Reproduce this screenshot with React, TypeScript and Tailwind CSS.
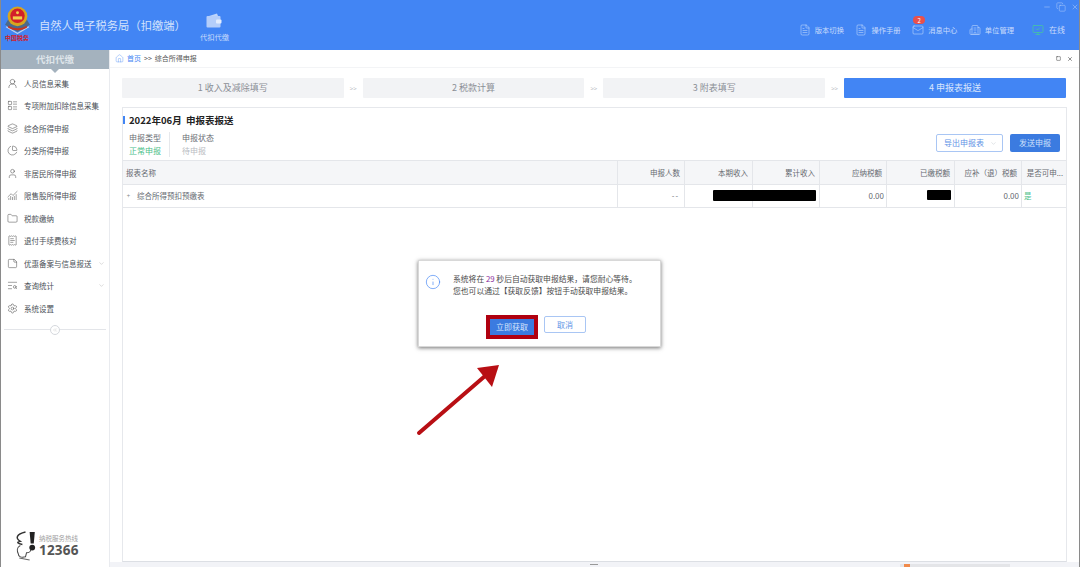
import {
  ChartNoAxesCombined,
  ChevronDown,
  ChevronsLeft,
  FileText,
  Folder,
  Home,
  Info,
  Layers,
  LayoutList,
  Mail,
  MonitorCheck,
  PieChart,
  ReceiptText,
  Settings,
  StickyNote,
  TextSearch,
  User,
  UserRound,
  Building2,
  Copy,
  Square,
  X,
  Minus,
} from "lucide-react";

const font = { fontFamily: '"Noto Sans CJK SC", "Liberation Sans", sans-serif' };

const menu = [
  { label: "人员信息采集", icon: UserRound },
  { label: "专项附加扣除信息采集", icon: LayoutList },
  { label: "综合所得申报", icon: Layers },
  { label: "分类所得申报", icon: PieChart },
  { label: "非居民所得申报", icon: User },
  { label: "限售股所得申报", icon: ChartNoAxesCombined },
  { label: "税款缴纳", icon: Folder },
  { label: "退付手续费核对", icon: ReceiptText },
  { label: "优惠备案与信息报送", icon: StickyNote, more: true },
  { label: "查询统计", icon: TextSearch, more: true },
  { label: "系统设置", icon: Settings },
];

const steps = ["1 收入及减除填写", "2 税款计算", "3 附表填写", "4 申报表报送"];

const headers = ["申报人数", "本期收入", "累计收入", "应纳税额", "已缴税额", "应补（退）税额", "是否可申..."];
const cols = "grid grid-cols-[494px_67px_68px_67px_67px_68px_67px_46px]";

function Emblem() {
  return (
    <div className="flex w-[30px] flex-col items-center">
      <svg width="27" height="28" viewBox="0 0 26 27">
        <path d="M1 18 L13 25 L25 18 L22 13 L4 13 Z" fill="#4b6a8c" />
        <path d="M2 20 L13 26.5 L24 20" fill="none" stroke="#c9d6e4" strokeWidth="1" />
        <circle cx="13" cy="10" r="9.5" fill="#d8a51f" />
        <circle cx="13" cy="9.5" r="7" fill="#d3202a" />
        <rect x="8.5" y="10" width="9" height="3" fill="#f3cf4c" />
        <circle cx="13" cy="6.5" r="1.4" fill="#f3cf4c" />
        <path d="M4 19 Q13 24 22 19 L22 21 Q13 26 4 21 Z" fill="#c6341f" />
      </svg>
      <span className="text-[6px] leading-[7px] font-bold text-[#d3202a]">中国税务</span>
    </div>
  );
}

function Wallet() {
  return (
    <svg width="16" height="15" viewBox="0 0 16 15">
      <path d="M3 3 L11 0.5 L12 3 Z" fill="#bcd4fb" />
      <rect x="0.5" y="3" width="14" height="11.5" rx="1" fill="#b4cefa" />
      <rect x="10" y="6.5" width="5.5" height="4" rx="1" fill="#e3edfe" />
    </svg>
  );
}

function Headset() {
  return (
    <svg width="25" height="31" viewBox="0 0 24 30">
      <path d="M12 2 C3 4 2 8 7 11 C3 12 4 13 9 14" fill="none" stroke="#333" strokeWidth="1.4" />
      <path d="M16 2 H21 L20 13 H17 Z" fill="#222" />
      <circle cx="18.5" cy="17" r="2.8" fill="#222" />
      <path d="M7 15 C3 17 4 21 5 23 C5 26 8 27 12 26 L13 22 C16 22 17 20 17 19" fill="none" stroke="#444" strokeWidth="1" />
      <path d="M6 27 L16 29" stroke="#666" strokeWidth="1" />
    </svg>
  );
}

function NavItem({ icon: Icon, label, badge }: { icon: typeof Mail; label: string; badge?: string }) {
  return (
    <div className="relative flex items-center gap-[4px]">
      <Icon size={12} strokeWidth={1} className="text-[#d5e4fd]" />
      <span className="text-[7.3px] text-[#c9dcfc]">{label}</span>
      {badge && (
        <span className="absolute top-[-8px] left-[1px] flex h-[8px] w-[12px] items-center justify-center rounded-full bg-[#e9504b] text-[6px] text-white">
          {badge}
        </span>
      )}
    </div>
  );
}

export default function App() {
  return (
    <div style={font} className="relative flex h-[567px] w-[1080px] flex-col overflow-hidden border-x border-[#8a8a8a] bg-white">
      <header className="flex h-[50px] shrink-0 bg-[#4285f4]">
        <div className="flex items-start gap-[7px] pt-[6px] pl-[1px]">
          <Emblem />
          <span className="mt-[11px] text-[11.3px] text-[#d3e2fc]">自然人电子税务局（扣缴端）</span>
        </div>
        <div className="ml-[14px] flex flex-col items-center pt-[13px]">
          <Wallet />
          <span className="mt-[4px] text-[7.3px] text-[#c9dcfc]">代扣代缴</span>
        </div>
        <div className="ml-auto flex flex-col items-end">
          <div className="flex h-[13px] items-center gap-[5px] text-[#b5cffa]">
            <Minus size={8} strokeWidth={1.5} />
            <Copy size={10} strokeWidth={1.2} />
            <X size={8} strokeWidth={1.5} />
          </div>
          <div className="mt-[11px] flex items-center pr-[14px]">
            <div className="flex items-center gap-[11.5px]">
              <NavItem icon={FileText} label="版本切换" />
              <NavItem icon={FileText} label="操作手册" />
              <NavItem icon={Mail} label="消息中心" badge="2" />
              <NavItem icon={Building2} label="单位管理" />
            </div>
            <div className="ml-[18px] flex items-center gap-[5px]">
              <MonitorCheck size={12} strokeWidth={1.2} className="text-[#46d68a]" />
              <span className="text-[8px] text-[#c9dcfc]">在线</span>
            </div>
          </div>
        </div>
      </header>

      <div className="flex min-h-0 flex-1">
        <aside className="flex w-[109px] shrink-0 flex-col border-r border-[#e9ebef]">
          <div className="relative flex h-[19px] shrink-0 items-center justify-center bg-[#a4b2be] text-[9.5px] font-bold text-[#dfe5ea]">
            代扣代缴
            <span className="absolute top-[19px] left-[50px] border-x-[4px] border-t-[4px] border-x-transparent border-t-[#a4b2be]" />
          </div>
          <nav className="flex flex-col pt-[3px]">
            {menu.map((m) => (
              <div key={m.label} className="flex h-[22.5px] items-center pr-[4px] pl-[6px] text-[7.5px] text-[#4a4f57]">
                <m.icon size={11} strokeWidth={1} className="shrink-0 text-[#333]" />
                <span className="ml-[6px] whitespace-nowrap">{m.label}</span>
                {m.more && <ChevronDown size={7} strokeWidth={1} className="ml-auto text-[#888]" />}
              </div>
            ))}
          </nav>
          <div className="relative mx-[3px] mt-[9px] border-t border-[#e3e5e9]">
            <span className="absolute top-[-5px] left-[46px] flex h-[10px] w-[10px] items-center justify-center rounded-full border border-[#d5d8dd] bg-white text-[#999]">
              <ChevronsLeft size={6} strokeWidth={1} />
            </span>
          </div>
          <div className="mt-auto mb-[6px] flex items-center gap-[1px] pl-[12px]">
            <Headset />
            <div className="flex flex-col">
              <span className="text-[6.5px] leading-[9px] text-[#a0a0a0]">纳税服务热线</span>
              <span className="text-[13.5px] leading-[15px] font-bold tracking-[0.2px] text-[#555]" style={{ fontFamily: '"Open Sans", sans-serif' }}>12366</span>
            </div>
          </div>
        </aside>

        <main className="flex min-w-0 flex-1 flex-col bg-white">
          <div className="flex h-[18px] shrink-0 items-center border-b border-[#f3f4f6] pl-[5px]">
            <Home size={9} strokeWidth={1} className="text-[#4285f4]" />
            <span className="ml-[3px] text-[7px] text-[#4285f4]">首页</span>
            <span className="ml-[3px] text-[7px] text-[#555]">&gt;&gt;</span>
            <span className="ml-[3px] text-[7px] text-[#555]">综合所得申报</span>
            <div className="ml-auto flex items-center gap-[6px] pr-[6px] text-[#222]">
              <Square size={5} strokeWidth={2} />
              <X size={6} strokeWidth={2} />
            </div>
          </div>

          <div className="flex shrink-0 items-center pt-[10px] pl-[12px]">
            {steps.map((s, i) => (
              <div key={s} className="flex items-center">
                {i > 0 && <span className="w-[19px] text-center text-[6px] text-[#b5b9c0]">&gt;&gt;</span>}
                <div
                  className={`flex h-[20px] w-[221.7px] items-center justify-center rounded-[1px] text-[9px] ${
                    i === 3 ? "bg-[#4285f4] text-[#d9e6fd]" : "bg-[#f2f3f5] text-[#8b8f96]"
                  }`}
                >
                  {s}
                </div>
              </div>
            ))}
          </div>

          <section className="mt-[9px] ml-[12px] w-[945px] flex-1 border border-[#e6e8ec] border-b-[#dcdfe4]">
            <div className="flex h-[53px] border-b border-[#e4e6ea]">
              <div className="flex-1 pt-[5px]">
                <div className="flex items-center">
                  <span className="h-[8px] w-[2px] bg-[#4285f4]" />
                  <span className="ml-[4px] text-[9.5px] font-bold text-[#222]">2022年06月&nbsp;&nbsp;申报表报送</span>
                </div>
                <div className="mt-[5px] flex pl-[6px] text-[8px] leading-[12.5px]">
                  <div className="border-r border-[#e6e8ec] pr-[8px]">
                    <div className="text-[#6b6f76]">申报类型</div>
                    <div className="text-[#4bc08a]">正常申报</div>
                  </div>
                  <div className="pl-[12px]">
                    <div className="text-[#6b6f76]">申报状态</div>
                    <div className="text-[#b9bcc2]">待申报</div>
                  </div>
                </div>
              </div>
              <div className="flex items-start gap-[7px] pt-[26px] pr-[6px]">
                <div className="flex h-[18px] w-[67px] items-center justify-between rounded-[2px] border border-[#a9c6f4] pr-[5px] pl-[7px] text-[8px] text-[#5f94e6]">
                  导出申报表
                  <ChevronDown size={7} strokeWidth={1} className="text-[#9aa3af]" />
                </div>
                <div className="flex h-[18px] w-[50px] items-center justify-center rounded-[2px] bg-[#3b7be0] text-[8px] text-[#cfe0fb]">发送申报</div>
              </div>
            </div>

            <div className={`${cols} h-[24px] border-b border-[#e4e6ea] bg-[#f5f6f8] text-[7.5px] text-[#666a71]`}>
              <div className="flex items-center pl-[3px]">报表名称</div>
              {headers.map((h) => (
                <div key={h} className={`flex items-center justify-end border-l border-[#e4e6ea] pr-[4px] whitespace-nowrap ${h === "是否可申..." ? "overflow-hidden" : ""}`}>
                  {h}
                </div>
              ))}
            </div>
            <div className={`${cols} relative h-[23px] border-b border-[#e4e6ea] text-[7.5px] text-[#666a71]`}>
              <div className="flex items-center pl-[3px]">
                <span className="flex h-[5px] w-[5px] items-center justify-center text-[6px] leading-none text-[#888]">+</span>
                <span className="ml-[6px]">综合所得预扣预缴表</span>
              </div>
              <div className="flex items-center justify-end border-l border-[#e4e6ea] pr-[5px] tracking-[1px]">--</div>
              <div className="border-l border-[#e4e6ea]" />
              <div className="border-l border-[#e4e6ea]" />
              <div className="flex items-center justify-end border-l border-[#e4e6ea] pr-[2px] text-[8px]">0.00</div>
              <div className="border-l border-[#e4e6ea]" />
              <div className="flex items-center justify-end border-l border-[#e4e6ea] pr-[2px] text-[8px]">0.00</div>
              <div className="flex items-center border-l border-[#e4e6ea] pl-[2px] text-[#4bc08a]">是</div>
              <span className="absolute top-[5px] left-[590px] h-[11px] w-[103px] rounded-[1px] bg-black" />
              <span className="absolute top-[5px] left-[804px] h-[10px] w-[24px] rounded-[1px] bg-black" />
            </div>
          </section>
          <div className="relative h-[5px] shrink-0 bg-[#f2f3f7]">
            <span className="absolute top-[2px] left-[480px] h-[1px] w-[8px] bg-[#999]" />
            <span className="absolute top-[2px] left-[790px] h-[3px] w-[110px] bg-[#e4e5e8]" />
            <span className="absolute top-[2px] left-[794px] h-[3px] w-[6px] bg-[#f08a4b]" />
          </div>
        </main>
      </div>

      {/* dialog */}
      <div className="absolute top-[260px] left-[417px] h-[87px] w-[243px] border border-[#d8d8d8] bg-white shadow-[0_1px_4px_rgba(0,0,0,0.55)]">
        <div className="flex items-start pt-[12px] pl-[6px]">
          <Info size={16} strokeWidth={1} className="mt-[1px] text-[#4285f4]" />
          <div className="ml-[12px] text-[7.8px] leading-[11.5px] whitespace-nowrap text-[#4a4a4a]">
            <p>
              系统将在 <span className="text-[#8a2d9c]">29</span> 秒后自动获取申报结果，请您耐心等待。
            </p>
            <p>您也可以通过【获取反馈】按钮手动获取申报结果。</p>
          </div>
        </div>
        <div className="absolute top-[54px] left-[67px] flex items-start gap-[6px]">
          <div className="border-[4px] border-[#b00010]">
            <div className="flex h-[16px] w-[44px] items-center justify-center bg-[#3b7be0] text-[8px] text-[#d5e4fc]">立即获取</div>
          </div>
          <div className="mt-[1px] flex h-[17px] w-[42px] items-center justify-center rounded-[2px] border border-[#a9c6f4] text-[8px] text-[#5f94e6]">取消</div>
        </div>
      </div>

      {/* arrow annotation */}
      <svg className="absolute top-[360px] left-[414px]" width="90" height="78" viewBox="0 0 90 78">
        <line x1="4" y1="73" x2="70" y2="16" stroke="#b80f14" strokeWidth="4" strokeLinecap="round" />
        <path d="M84 5 L62 8 L77 27 Z" fill="#b80f14" />
      </svg>
    </div>
  );
}
